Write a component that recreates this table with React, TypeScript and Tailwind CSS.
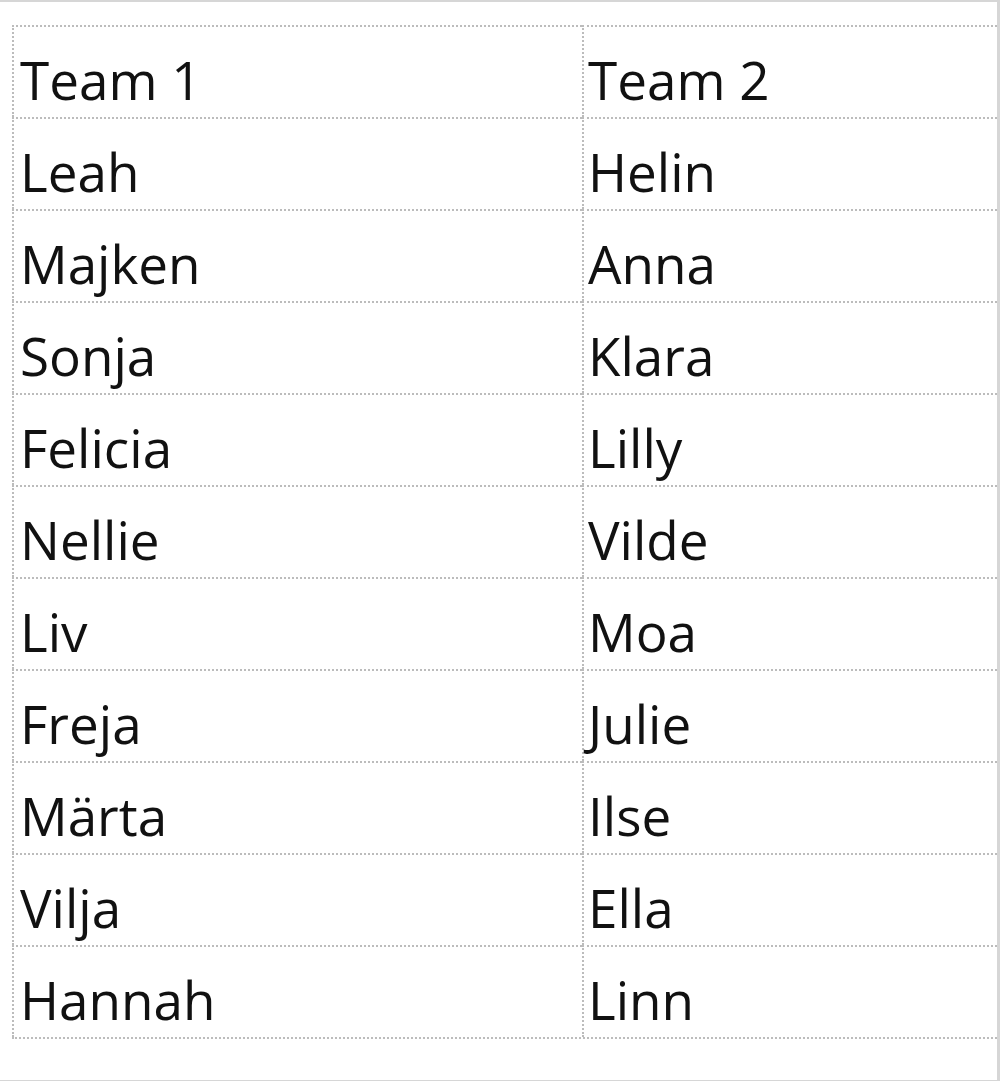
import React from "react";

const rows: [string, string][] = [
  ["Team 1", "Team 2"],
  ["Leah", "Helin"],
  ["Majken", "Anna"],
  ["Sonja", "Klara"],
  ["Felicia", "Lilly"],
  ["Nellie", "Vilde"],
  ["Liv", "Moa"],
  ["Freja", "Julie"],
  ["Märta", "Ilse"],
  ["Vilja", "Ella"],
  ["Hannah", "Linn"],
];

const App = () => {
  return (
    <div className="w-[1000px] h-[1081px] bg-white border-t-2 border-r-[3px] border-b border-[#d6d6d6] pt-[23px] pl-[12px] overflow-hidden">
      <div
        className="grid grid-cols-[570px_1fr] border-b-2 border-dotted border-[#bcbcbc] text-[#111] text-[53px] font-medium leading-none"
        style={{ fontFamily: '"Open Sans", "Noto Sans", sans-serif' }}
      >
        {rows.map(([a, b], i) => (
          <React.Fragment key={i}>
            <div className="h-[92px] border-t-2 border-l-2 border-dotted border-[#bcbcbc] pt-[26px] pl-[6px]">{a}</div>
            <div className="h-[92px] border-t-2 border-l-2 border-dotted border-[#bcbcbc] pt-[26px] pl-[4px]">{b}</div>
          </React.Fragment>
        ))}
      </div>
    </div>
  );
};

export default App;
